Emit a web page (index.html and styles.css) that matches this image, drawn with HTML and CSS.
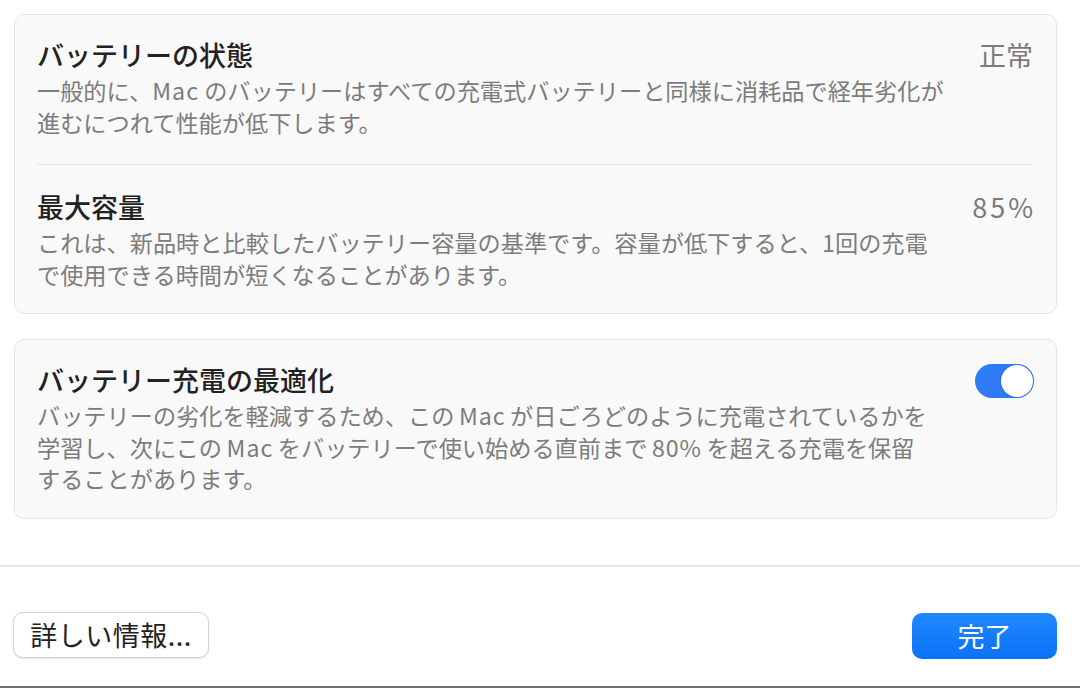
FILE: index.html
```html
<!DOCTYPE html>
<html lang="ja">
<head>
<meta charset="utf-8">
<link rel="stylesheet" href="styles.css">
</head>
<body>
<div class="window">
  <div class="content">
    <section class="card">
      <div class="row row-first">
        <div class="text">
          <div class="title">バッテリーの状態</div>
          <div class="desc">一般的に、<span class="latin">Mac</span> のバッテリーはすべての充電式バッテリーと同様に消耗品で経年劣化が<br>進むにつれて性能が低下します。</div>
        </div>
        <div class="value">正常</div>
      </div>
      <div class="divider"></div>
      <div class="row row-second">
        <div class="text">
          <div class="title">最大容量</div>
          <div class="desc">これは、新品時と比較したバッテリー容量の基準です。容量が低下すると、1回の充電<br>で使用できる時間が短くなることがあります。</div>
        </div>
        <div class="value value-num">85%</div>
      </div>
    </section>
    <section class="card card-two">
      <div class="row">
        <div class="text">
          <div class="title">バッテリー充電の最適化</div>
          <div class="desc">バッテリーの劣化を軽減するため、この<span class="latin spaced">Mac</span>が日ごろどのように充電されているかを<br>学習し、次にこの<span class="latin spaced">Mac</span>をバッテリーで使い始める直前まで<span class="latin spaced">80%</span>を超える充電を保留<br>することがあります。</div>
        </div>
        <div class="toggle"><span class="knob"></span></div>
      </div>
    </section>
  </div>
  <div class="footer">
    <button class="btn btn-secondary">詳しい情報...</button>
    <button class="btn btn-primary">完了</button>
  </div>
</div>
</body>
</html>
```
FILE: styles.css
```css
* { box-sizing: border-box; }
html, body {
  margin: 0;
  padding: 0;
  background: #ffffff;
}
body {
  width: 1080px;
  height: 688px;
  overflow: hidden;
  font-family: "Noto Sans CJK JP", "Noto Sans", sans-serif;
}
.window {
  width: 1080px;
  height: 688px;
  display: flex;
  flex-direction: column;
  border-bottom: 2px solid #6f6f6f;
}
.content {
  padding: 14px 23px 0 14px;
  display: flex;
  flex-direction: column;
  gap: 25px;
}
.card {
  background: #f9f9f9;
  border: 1px solid #e6e6e6;
  border-radius: 10px;
  padding: 0 23px 0 22px;
}
.row {
  display: flex;
  justify-content: space-between;
  align-items: flex-start;
}
.row-first {
  padding: 23px 0 26px;
}
.row-second {
  padding: 25px 0 23px;
}
.title {
  font-size: 27px;
  line-height: 34px;
  font-weight: 500;
  color: #222222;
}
.desc {
  margin-top: 3px;
  font-size: 23.2px;
  line-height: 31.5px;
  color: #7c7c7c;
}
.latin {
  letter-spacing: 1px;
}
.spaced {
  margin: 0 4.5px;
}
.value {
  font-size: 27px;
  line-height: 34px;
  color: #7a7a7a;
}
.value-num {
  letter-spacing: 3px;
  margin-right: -3px;
}
.divider {
  height: 1px;
  background: #e4e4e4;
}
.card-two .row {
  padding: 23px 0 23px;
}
.toggle {
  width: 59px;
  height: 34px;
  border-radius: 17px;
  background: #2f7bf5;
  margin-top: 1px;
  margin-right: -1px;
  position: relative;
  flex: none;
}
.knob {
  position: absolute;
  right: 1px;
  top: 1px;
  width: 32px;
  height: 32px;
  border-radius: 50%;
  background: #ffffff;
  box-shadow: 0 0 0 1px rgba(40, 90, 180, 0.35);
}
.footer {
  margin-top: 46px;
  border-top: 2px solid #e5e5e5;
  flex: 1;
  display: flex;
  justify-content: space-between;
  align-items: flex-start;
  padding: 45px 23px 0 13px;
}
.btn {
  font-family: "Noto Sans CJK JP", "Noto Sans", sans-serif;
  font-size: 27px;
  height: 46px;
  border-radius: 10px;
  cursor: default;
  padding: 0;
}
.btn-secondary {
  width: 196px;
  background: #ffffff;
  color: #1f1f1f;
  border: 1px solid #d4d4d4;
  box-shadow: 0 1px 2px rgba(0, 0, 0, 0.12);
  line-height: 42px;
  letter-spacing: 0.5px;
}
.btn-primary {
  width: 145px;
  margin-top: 1px;
  color: #ffffff;
  border: none;
  background: linear-gradient(#1f88ff, #0b72f6);
  line-height: 44px;
}
```
